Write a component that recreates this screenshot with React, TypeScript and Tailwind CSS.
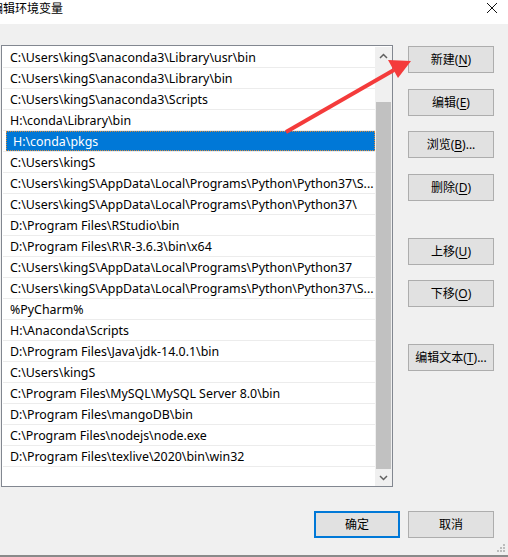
import React from "react";

const paths = [
  "C:\\Users\\kingS\\anaconda3\\Library\\usr\\bin",
  "C:\\Users\\kingS\\anaconda3\\Library\\bin",
  "C:\\Users\\kingS\\anaconda3\\Scripts",
  "H:\\conda\\Library\\bin",
  "H:\\conda\\pkgs",
  "C:\\Users\\kingS",
  "C:\\Users\\kingS\\AppData\\Local\\Programs\\Python\\Python37\\S...",
  "C:\\Users\\kingS\\AppData\\Local\\Programs\\Python\\Python37\\",
  "D:\\Program Files\\RStudio\\bin",
  "D:\\Program Files\\R\\R-3.6.3\\bin\\x64",
  "C:\\Users\\kingS\\AppData\\Local\\Programs\\Python\\Python37",
  "C:\\Users\\kingS\\AppData\\Local\\Programs\\Python\\Python37\\S...",
  "%PyCharm%",
  "H:\\Anaconda\\Scripts",
  "D:\\Program Files\\Java\\jdk-14.0.1\\bin",
  "C:\\Users\\kingS",
  "C:\\Program Files\\MySQL\\MySQL Server 8.0\\bin",
  "D:\\Program Files\\mangoDB\\bin",
  "C:\\Program Files\\nodejs\\node.exe",
  "D:\\Program Files\\texlive\\2020\\bin\\win32",
];

const font = { fontFamily: '"Noto Sans", "Noto Sans CJK SC", sans-serif' };

const Btn = ({ label, k, tail = "", top, primary = false }: { label: string; k: string; tail?: string; top: string; primary?: boolean }) => (
  <div
    className={`${top} flex h-[27px] w-[86px] items-center justify-center bg-[#e1e1e1] text-[12px] text-black ${
      primary ? "border-2 border-[#0078d7]" : "border border-[#adadad]"
    }`}
  >
    {label}
    {k && (
      <>
        (<span className="underline underline-offset-2">{k}</span>)
      </>
    )}
    {tail}
  </div>
);

export default function App() {
  return (
    <div className="relative h-[557px] w-[508px] overflow-hidden bg-[#f0f0f0]" style={font}>
      {/* title bar */}
      <div className="flex h-[24px] items-start justify-between bg-white">
        <span className="ml-[-9px] mt-[1px] text-[12px] leading-[16px] text-black">编辑环境变量</span>
        <svg width="12" height="12" viewBox="0 0 12 12" className="mr-[10px] mt-[2px]">
          <path d="M1 1 L11 11 M11 1 L1 11" stroke="#111" strokeWidth="1" />
        </svg>
      </div>

      <div className="flex">
        {/* list */}
        <div className="ml-[1px] mt-[21px] flex h-[442px] w-[392px] border border-[#828790] bg-white pt-[1px]">
          <div className="ml-[1px] flex-1 overflow-hidden">
            {paths.map((p, i) => (
              <div key={i} className="h-[21px] border-b border-[#ececec]">
                <div
                  className={`flex h-[20px] items-center whitespace-nowrap pl-[7px] pt-[2px] text-[12.4px] ${
                    i === 4 ? "ml-[3px] bg-[#0078d7] pl-[4px] text-white outline-1 outline-dotted outline-[#d88a3c] -outline-offset-1" : "text-black"
                  }`}
                >
                  {p}
                </div>
              </div>
            ))}
          </div>
          {/* scrollbar */}
          <div className="flex w-[17px] flex-col bg-[#f0f0f0]">
            <div className="flex h-[17px] items-center justify-center">
              <svg width="9" height="6" viewBox="0 0 9 6">
                <path d="M1 5 L4.5 1.5 L8 5" fill="none" stroke="#606060" strokeWidth="1.5" />
              </svg>
            </div>
            <div className="h-[38px]" />
            <div className="mx-[1px] h-[367px] bg-[#c1c1c1]" />
            <div className="flex flex-1 items-center justify-center">
              <svg width="9" height="6" viewBox="0 0 9 6">
                <path d="M1 1 L4.5 4.5 L8 1" fill="none" stroke="#606060" strokeWidth="1.5" />
              </svg>
            </div>
          </div>
        </div>

        {/* side buttons */}
        <div className="ml-[15px] flex flex-col">
          <Btn label="新建" k="N" top="mt-[22px]" />
          <Btn label="编辑" k="E" top="mt-[16px]" />
          <Btn label="浏览" k="B" tail="..." top="mt-[15px]" />
          <Btn label="删除" k="D" top="mt-[16px]" />
          <Btn label="上移" k="U" top="mt-[37px]" />
          <Btn label="下移" k="O" top="mt-[15px]" />
          <Btn label="编辑文本" k="T" tail="..." top="mt-[37px]" />
        </div>
      </div>

      {/* bottom buttons */}
      <div className="mt-[24px] flex justify-end gap-[8px] pr-[14px]">
        <Btn label="确定" k="" top="" primary />
        <Btn label="取消" k="" top="" />
      </div>

      {/* resize grip */}
      <svg width="10" height="10" viewBox="0 0 10 10" className="absolute bottom-[4px] right-[2px]">
        <rect x="7" y="1" width="2" height="2" fill="#bcbcbc" />
        <rect x="4" y="4" width="2" height="2" fill="#bcbcbc" />
        <rect x="7" y="4" width="2" height="2" fill="#bcbcbc" />
        <rect x="1" y="7" width="2" height="2" fill="#bcbcbc" />
        <rect x="4" y="7" width="2" height="2" fill="#bcbcbc" />
        <rect x="7" y="7" width="2" height="2" fill="#bcbcbc" />
      </svg>

      <div className="absolute bottom-0 left-0 h-[2px] w-full bg-[#8a8a8a]" />

      {/* red annotation arrow */}
      <svg width="508" height="557" className="pointer-events-none absolute left-0 top-0">
        <line x1="286" y1="132" x2="394" y2="70" stroke="#f43b3b" strokeWidth="4" />
        <polygon points="411,61 388,60 398,78" fill="#f43b3b" />
      </svg>
    </div>
  );
}
